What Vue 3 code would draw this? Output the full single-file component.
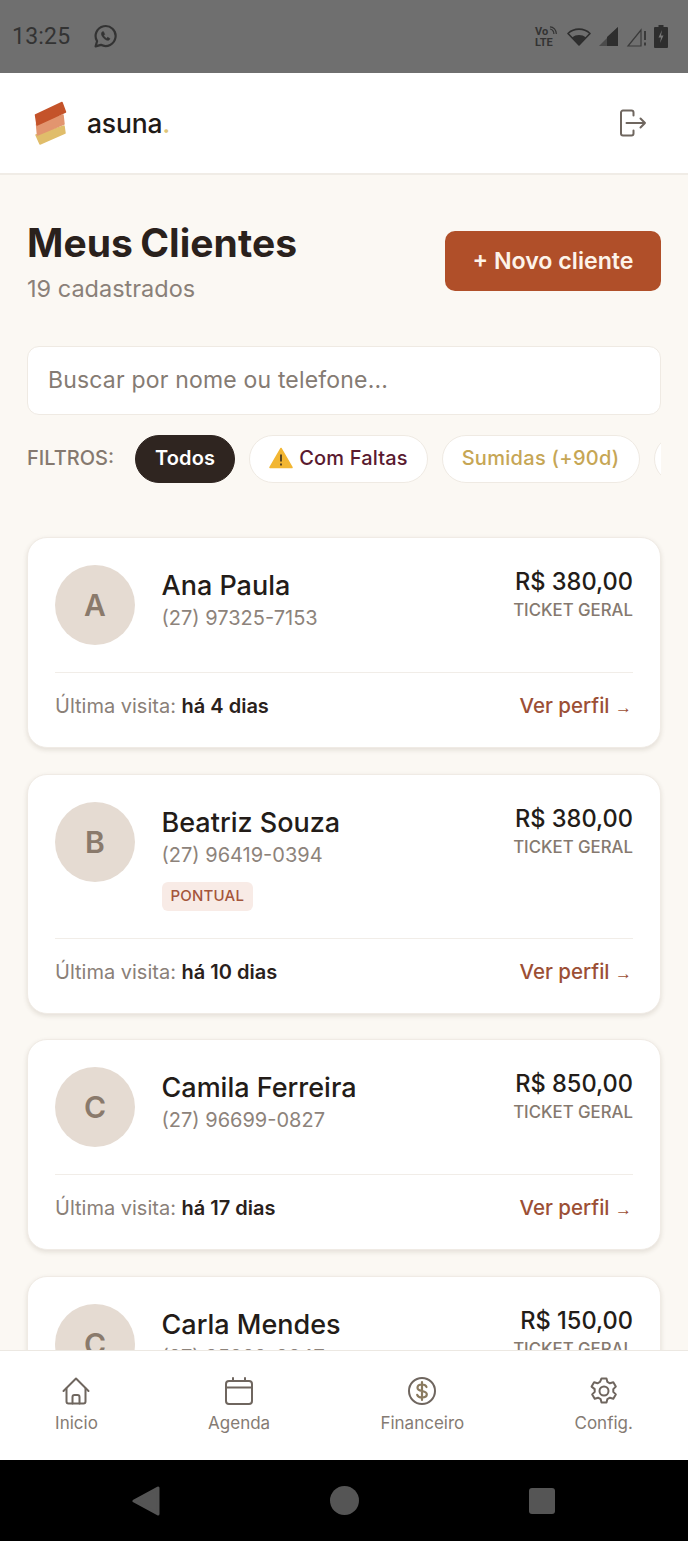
<script setup>
const clients = [
  { initial: 'A', name: 'Ana Paula', phone: '(27) 97325-7153', value: 'R$ 380,00', last: 'há 4 dias' },
  { initial: 'B', name: 'Beatriz Souza', phone: '(27) 96419-0394', value: 'R$ 380,00', last: 'há 10 dias', tag: 'PONTUAL' },
  { initial: 'C', name: 'Camila Ferreira', phone: '(27) 96699-0827', value: 'R$ 850,00', last: 'há 17 dias' },
  { initial: 'C', name: 'Carla Mendes', phone: '(27) 95822-8847', value: 'R$ 150,00', last: 'há 20 dias' }
]
</script>

<template>
  <div class="phone">
    <div class="status">
      <div class="status-left">
        <span class="time">13:25</span>
        <svg class="wa" viewBox="0 0 24 24" fill="none" stroke="#333" stroke-width="2.1" stroke-linejoin="round" stroke-linecap="round">
          <path d="M2.5 21.5l1.4-5A9.6 9.6 0 1 1 7.6 20z" />
          <path d="M8.8 7.6c-1 1-1 2.6.4 4.6 1.5 2.1 3.5 3.4 5 3.5 1 0 1.9-.7 2-1.7l-2.2-1.2-1 1c-1-.4-2.2-1.6-2.7-2.8l.9-1-1-2.4z" fill="#333" stroke-width="0.6" />
        </svg>
      </div>
      <div class="status-right">
        <div class="volte">
          <div class="vo">Vo<svg width="9" height="10" viewBox="0 0 9 10" fill="none" stroke="#333" stroke-width="1.2"><path d="M1 3c2 0 4 2 4 5M1 .8c3.5 0 6.5 3 6.5 7.2"/></svg></div>
          <span>LTE</span>
        </div>
        <svg width="24" height="19" viewBox="0 0 24 19"><path d="M12 18L1 6.5C7 .7 17 .7 23 6.5z" fill="none" stroke="#2e2e2e" stroke-width="1.6" stroke-linejoin="round"/><path d="M12 18L5 10.5C9 7.2 15 7.2 19 10.5z" fill="#2e2e2e"/></svg>
        <svg width="21" height="21" viewBox="0 0 21 21"><path d="M20 1v19H1z" fill="#2e2e2e" opacity=".55"/><path d="M20 1v19H9V11z" fill="#2e2e2e"/></svg>
        <svg width="21" height="21" viewBox="0 0 21 21" fill="none" stroke="#3a3a3a" stroke-width="1.2"><path d="M15 4L2 20h13z"/><path d="M19 5v9M19 16.5v3" stroke-width="2"/></svg>
        <svg width="14" height="23" viewBox="0 0 14 23"><path d="M4.5 0h5v2H13a1 1 0 0 1 1 1v19a1 1 0 0 1-1 1H1a1 1 0 0 1-1-1V3a1 1 0 0 1 1-1h3.5z" fill="#2e2e2e"/><path d="M8 5L4.5 12.5H7L6 18l3.5-7.5H7z" fill="#777"/></svg>
      </div>
    </div>

    <header class="top">
      <div class="brand">
        <svg class="logo" width="36" height="46" viewBox="0 0 36 46">
          <path d="M3 35l28-9 1 7L7 44z" fill="#e0bd6b" stroke="#e0bd6b" stroke-width="1.5" stroke-linejoin="round"/>
          <path d="M3.5 24L30 15l1 9L4.5 35z" fill="#e2956f" stroke="#e2956f" stroke-width="1.5" stroke-linejoin="round"/>
          <path d="M2.5 15L29 2.5 32.5 12 4 25z" fill="#c4532a" stroke="#c4532a" stroke-width="1.5" stroke-linejoin="round"/>
        </svg>
        <span class="word">asuna<span class="dot">.</span></span>
      </div>
      <svg class="logout" width="28" height="28" viewBox="0 0 28 28" fill="none" stroke="#6f665f" stroke-width="2" stroke-linecap="round" stroke-linejoin="round">
        <path d="M14.5 6.5v-3a2 2 0 0 0-2-2H4a2 2 0 0 0-2 2v21a2 2 0 0 0 2 2h8.5a2 2 0 0 0 2-2v-3"/>
        <path d="M7.5 14H26M21.5 9.5L26 14l-4.5 4.500"/>
      </svg>
    </header>

    <main class="content">
      <div class="title-row">
        <div>
          <h1>Meus Clientes</h1>
          <p class="count">19 cadastrados</p>
        </div>
        <button class="new">+ Novo cliente</button>
      </div>

      <input class="search" type="text" placeholder="Buscar por nome ou telefone..." />

      <div class="filters">
        <span class="flabel">FILTROS:</span>
        <span class="chip active">Todos</span>
        <span class="chip faltas">
          <svg width="24" height="22" viewBox="0 0 24 22"><path d="M12 1.5L23 20.5H1z" fill="#f2b632" stroke="#f2b632" stroke-width="1.5" stroke-linejoin="round"/><path d="M12 7.5v7M12 16.5v2" stroke="#5a4520" stroke-width="2"/></svg>
          Com Faltas
        </span>
        <span class="chip sumidas">Sumidas (+90d)</span>
        <span class="chip more"></span>
      </div>

      <div class="list">
        <article v-for="c in clients" :key="c.name" class="card">
          <div class="card-top">
            <div class="avatar">{{ c.initial }}</div>
            <div class="info">
              <div class="name">{{ c.name }}</div>
              <div class="phone-no">{{ c.phone }}</div>
              <span v-if="c.tag" class="tag">{{ c.tag }}</span>
            </div>
            <div class="money">
              <div class="value">{{ c.value }}</div>
              <div class="ticket">TICKET GERAL</div>
            </div>
          </div>
          <div class="card-foot">
            <span class="last">Última visita: <b>{{ c.last }}</b></span>
            <span class="link">Ver perfil <small>→</small></span>
          </div>
        </article>
      </div>
    </main>

    <nav class="nav">
      <div class="nav-item">
        <svg viewBox="0 0 28 28" fill="none" stroke="#6f665f" stroke-width="2" stroke-linecap="round" stroke-linejoin="round">
          <path d="M1.5 14L14 1.5 26.5 14"/><path d="M4.5 11.5v13a2 2 0 0 0 2 2h15a2 2 0 0 0 2-2v-13"/><path d="M10.5 26.5V20a2 2 0 0 1 2-2h3a2 2 0 0 1 2 2v6.5"/>
        </svg>
        <span>Inicio</span>
      </div>
      <div class="nav-item">
        <svg viewBox="0 0 28 28" fill="none" stroke="#6f665f" stroke-width="2" stroke-linecap="round" stroke-linejoin="round">
          <rect x="1" y="4" width="26" height="23" rx="3"/><path d="M1 10.5h26M8 1v3M20 1v3"/>
        </svg>
        <span>Agenda</span>
      </div>
      <div class="nav-item">
        <svg viewBox="0 0 28 28" fill="none" stroke="#6f665f" stroke-width="2" stroke-linecap="round" stroke-linejoin="round">
          <circle cx="14" cy="14" r="13"/><path d="M18.5 10c-.5-1.5-2.3-2.5-4.500-2.5-2.600 0-4.500 1.300-4.500 3.200 0 4.500 9.300 2.100 9.300 6.600 0 1.900-2 3.200-4.800 3.200-2.400 0-4.200-1-4.800-2.700M14 5v18" stroke="#8a7a5f" stroke-width="2.2"/>
        </svg>
        <span>Financeiro</span>
      </div>
      <div class="nav-item">
        <svg viewBox="0 0 28 28" fill="none" stroke="#6f665f" stroke-width="2" stroke-linecap="round" stroke-linejoin="round">
          <path d="M11.5 1.5h5l.9 3.4 2.5 1.4 3.4-1 2.5 4.3-2.5 2.5v2.800l2.500 2.500-2.500 4.300-3.400-1-2.500 1.400-.9 3.400h-5l-.9-3.400-2.500-1.400-3.400 1-2.500-4.300 2.500-2.500v-2.800L1.600 9.600l2.500-4.300 3.400 1L10 4.900z"/><circle cx="14" cy="14" r="4.5"/>
        </svg>
        <span>Config.</span>
      </div>
    </nav>

    <div class="softkeys">
      <svg width="28" height="30" viewBox="0 0 28 30"><path d="M26 2v26L2 15z" fill="#555" stroke="#555" stroke-width="3" stroke-linejoin="round"/></svg>
      <span class="home"></span>
      <span class="recent"></span>
    </div>
  </div>
</template>

<style>
html, body { margin: 0; padding: 0; }
</style>

<style scoped>
.phone {
  width: 688px;
  height: 1541px;
  display: flex;
  flex-direction: column;
  overflow: hidden;
  background: #fbf8f3;
  font-family: Inter, "Liberation Sans", sans-serif;
  color: #2a211c;
}
.status {
  flex: 0 0 73px;
  box-sizing: border-box;
  background: #6f6f6f;
  display: flex;
  align-items: center;
  justify-content: space-between;
  padding: 0 20px 0 12px;
}
.status-left { display: flex; align-items: center; gap: 23px; }
.time { font-family: Roboto, sans-serif; font-size: 23px; color: #333; letter-spacing: .2px; }
.wa { width: 25px; height: 25px; }
.status-right { display: flex; align-items: center; gap: 7px; }
.volte {
  display: flex; flex-direction: column;
  font-family: Roboto, sans-serif; font-size: 11px; line-height: 11px; font-weight: 700; color: #333;
  width: 23px;
  margin-right: 2px;
}
.vo { display: flex; align-items: center; gap: 1px; }
.top {
  flex: 0 0 102px;
  box-sizing: border-box;
  background: #fff;
  border-bottom: 2px solid #f0ece6;
  display: flex;
  align-items: center;
  justify-content: space-between;
  padding: 0 41px 0 33px;
}
.brand { display: flex; align-items: center; gap: 18px; }
.word { font-size: 26.5px; font-weight: 500; color: #1f1a17; letter-spacing: -.2px; }
.dot { color: #dfc678; }
.content {
  flex: 1 1 0;
  min-height: 0;
  overflow: hidden;
  box-sizing: border-box;
  padding: 0 27px;
}
.title-row {
  display: flex;
  justify-content: space-between;
  align-items: flex-start;
  margin-top: 43px;
}
h1 {
  margin: 0;
  font-size: 39px;
  line-height: 50px;
  font-weight: 700;
  letter-spacing: .05px;
  word-spacing: -2px;
  color: #2a211c;
}
.count { margin: 6px 0 0; font-size: 23.5px; line-height: 30px; color: #8a8078; }
.new {
  width: 216px;
  height: 60px;
  margin-top: 13px;
  border: 0;
  border-radius: 10px;
  background: #b04f29;
  color: #fdf3e9;
  font: 600 23.2px Inter, sans-serif;
}
.search {
  display: block;
  box-sizing: border-box;
  width: 100%;
  height: 69px;
  margin-top: 42px;
  padding: 0 20px 2px;
  border: 1px solid #efeae3;
  border-radius: 12px;
  background: #fff;
  font: 400 23px Inter, sans-serif;
  letter-spacing: .18px;
  outline: none;
}
.search::placeholder { color: #857b73; opacity: 1; }
.filters {
  display: flex;
  align-items: center;
  gap: 14px;
  margin-top: 20px;
  overflow: hidden;
  white-space: nowrap;
}
.flabel { font-size: 20px; font-weight: 500; color: #85796f; margin-right: 7px; padding-bottom: 2px; }
.chip {
  flex: none;
  display: inline-flex;
  align-items: center;
  gap: 6px;
  box-sizing: border-box;
  height: 48px;
  padding: 0 19px 2px;
  border: 1px solid #efeae3;
  border-radius: 24px;
  background: #fff;
  font-size: 20px;
  font-weight: 500;
  letter-spacing: .15px;
  color: #5a4a40;
}
.active { background: #2f2520; border-color: #2f2520; color: #fff; font-weight: 600; }
.faltas { color: #5a1a30; }
.sumidas { color: #c6a655; letter-spacing: .3px; }
.more { width: 60px; }
.list { display: flex; flex-direction: column; gap: 25.5px; margin-top: 54px; }
.card {
  flex: none;
  box-sizing: border-box;
  padding: 27px;
  background: #fff;
  border: 1px solid #f0ebe5;
  border-radius: 20px;
  box-shadow: 0 2px 5px rgba(60, 40, 20, .12);
}
.card-top { display: flex; align-items: flex-start; }
.avatar {
  flex: none;
  width: 80px;
  height: 80px;
  border-radius: 50%;
  background: #e5dbd2;
  color: #8a7a6c;
  font-size: 30px;
  font-weight: 600;
  display: flex;
  align-items: center;
  justify-content: center;
}
.info { flex: 1; margin-left: 26.5px; }
.name { font-size: 27px; line-height: 41px; font-weight: 500; color: #231c18; }
.phone-no { font-size: 20px; line-height: 24px; color: #8d837b; }
.tag {
  display: block;
  width: fit-content;
  margin-top: 15px;
  padding: 0 9px;
  height: 29px;
  line-height: 28px;
  border-radius: 6px;
  background: #f8ebe6;
  color: #a4553b;
  font-size: 15px;
  font-weight: 500;
  letter-spacing: .2px;
}
.money { text-align: right; padding-top: 1px; }
.value { font-size: 23.6px; line-height: 32px; font-weight: 500; color: #231c18; }
.ticket { font-size: 16.8px; line-height: 25px; font-weight: 500; color: #85796f; }
.card-foot {
  display: flex;
  justify-content: space-between;
  align-items: center;
  margin-top: 27px;
  padding-top: 19px;
  border-top: 1px solid #f1ede8;
  line-height: 28px;
  font-size: 20px;
}
.last { color: #8a8078; }
.last b { font-weight: 600; color: #2a211c; }
.link { color: #9c4f35; font-weight: 500; font-size: 20.5px; }
.link small { font-family: "Liberation Sans", sans-serif; font-size: 17px; line-height: 0; margin-right: 1px; }
.nav {
  flex: 0 0 110px;
  box-sizing: border-box;
  background: #fff;
  border-top: 1px solid #ece8e2;
  display: flex;
  justify-content: space-around;
  padding-top: 26px;
}
.nav-item {
  display: flex;
  flex-direction: column;
  align-items: center;
  gap: 7px;
  font-size: 17px;
  line-height: 22px;
  color: #857b73;
}
.nav-item svg { width: 28px; height: 28px; }
.softkeys {
  flex: 0 0 81px;
  background: #000;
  display: flex;
  align-items: center;
  justify-content: space-between;
  padding: 0 133px 0 132px;
  box-sizing: border-box;
}
.home { width: 29px; height: 29px; border-radius: 50%; background: #555; }
.recent { width: 26px; height: 26px; border-radius: 3px; background: #555; }
</style>
